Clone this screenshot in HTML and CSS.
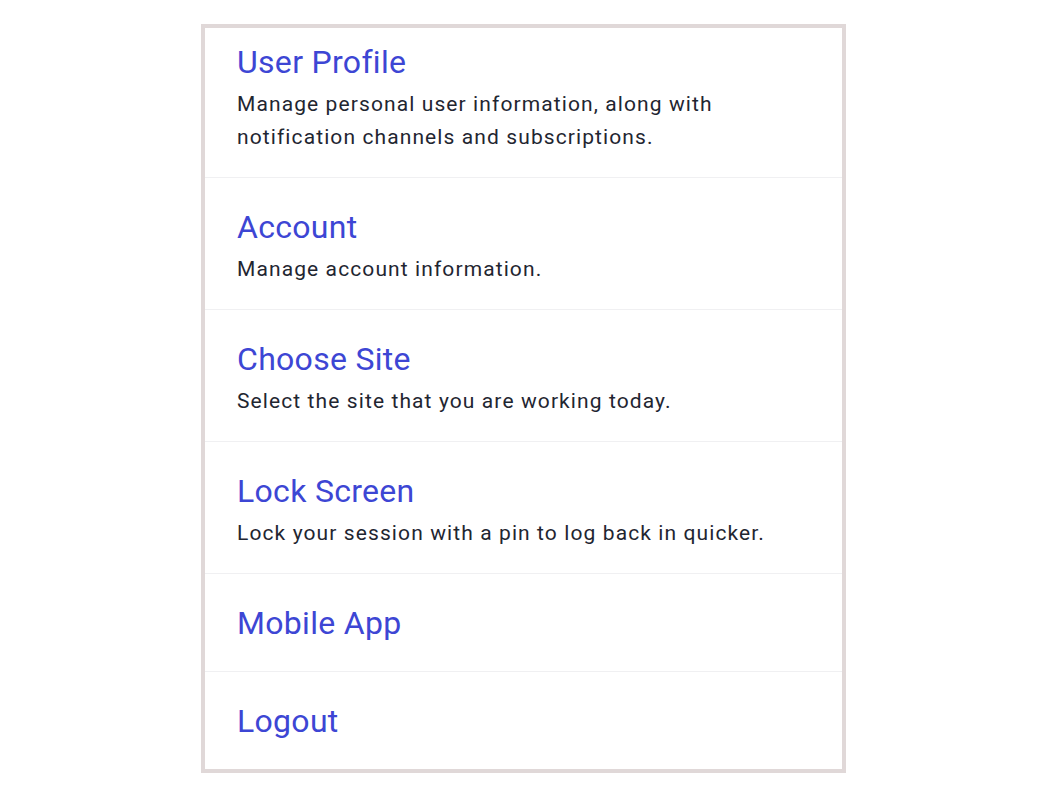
FILE: index.html
```html
<!DOCTYPE html>
<html lang="en">
<head>
  <meta charset="UTF-8">
  <meta name="viewport" content="width=device-width, initial-scale=1.0">
  <title>Settings</title>
  <link rel="stylesheet" href="styles.css">
</head>
<body>
  <div class="menu">
    <a class="item first" href="#">
      <div class="item-title">User Profile</div>
      <p class="item-desc">Manage personal user information, along with notification channels and subscriptions.</p>
    </a>
    <a class="item" href="#">
      <div class="item-title">Account</div>
      <p class="item-desc">Manage account information.</p>
    </a>
    <a class="item" href="#">
      <div class="item-title">Choose Site</div>
      <p class="item-desc">Select the site that you are working today.</p>
    </a>
    <a class="item" href="#">
      <div class="item-title">Lock Screen</div>
      <p class="item-desc">Lock your session with a pin to log back in quicker.</p>
    </a>
    <a class="item" href="#">
      <div class="item-title">Mobile App</div>
    </a>
    <a class="item" href="#">
      <div class="item-title">Logout</div>
    </a>
  </div>
</body>
</html>
```

FILE: styles.css
```css
* {
  margin: 0;
  padding: 0;
  box-sizing: border-box;
}

body {
  font-family: Roboto, "Liberation Sans", sans-serif;
  background-color: #fff;
  padding-top: 24px;
}

.menu {
  width: 645px;
  margin: 0 auto;
  border: 4px solid #e0d8d8;
  background-color: #fff;
  display: flex;
  flex-direction: column;
}

.item {
  display: block;
  padding: 28px 32px 27px;
  border-bottom: 1px solid #f0f0f2;
  text-decoration: none;
}

.item:last-child {
  border-bottom: none;
}

.item.first {
  padding-top: 13px;
}

.item-title {
  font-size: 32px;
  line-height: 42px;
  letter-spacing: 0.3px;
  color: #3d46d4;
}

.item-desc {
  font-size: 21px;
  line-height: 33px;
  letter-spacing: 1.1px;
  color: #1f2631;
  margin: 5px 0 -4px;
  max-width: 540px;
}
```
